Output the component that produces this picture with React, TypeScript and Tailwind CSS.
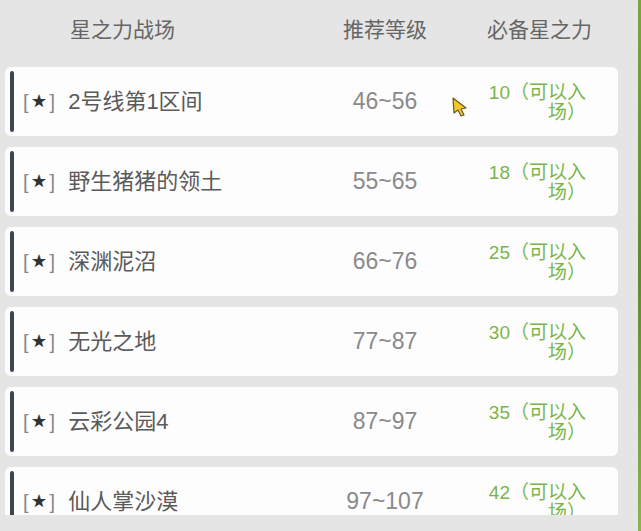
import React from 'react';

interface Arena {
  name: string;
  level: string;
  power: number;
}

const arenas: Arena[] = [
  { name: '2号线第1区间', level: '46~56', power: 10 },
  { name: '野生猪猪的领土', level: '55~65', power: 18 },
  { name: '深渊泥沼', level: '66~76', power: 25 },
  { name: '无光之地', level: '77~87', power: 30 },
  { name: '云彩公园4', level: '87~97', power: 35 },
  { name: '仙人掌沙漠', level: '97~107', power: 42 },
];

const font = "font-['Liberation_Sans','Noto_Sans_CJK_SC',sans-serif]";

const ArenaRow: React.FC<{ arena: Arena }> = ({ arena }) => (
  <div className="flex h-[69px] w-[613px] shrink-0 items-center rounded-md bg-[#fdfdfd]">
    <div className="ml-[5px] h-[61px] w-[4px] rounded-full bg-[#3e4550]" />
    <div className="ml-[9px] flex flex-1 items-center text-[22px] text-[#5a5a5a]">
      <span className="text-[20px] text-[#888]">[</span>
      <span className="mx-[3px] text-[15px] text-[#333]">★</span>
      <span className="text-[20px] text-[#888]">]</span>
      <span className="ml-[13px]">{arena.name}</span>
    </div>
    <div className="w-[120px] text-center text-[23px] text-[#8a8a8a]">{arena.level}</div>
    <div className="w-[173px] pt-[3px] pr-[32px] text-right text-[19px] leading-[20px] text-[#7bb548]">
      {arena.power}（可以入
      <br />
      场）
    </div>
  </div>
);

export default function App() {
  return (
    <div className={`relative flex h-[531px] w-[641px] overflow-hidden bg-[#e5e5e5] ${font}`}>
      <div className="flex flex-1 flex-col">
        <div className="flex h-[67px] shrink-0 items-center pb-[8px] text-[21px] text-[#666]">
          <div className="flex-1 pl-[70px]">星之力战场</div>
          <div className="w-[120px] text-center">推荐等级</div>
          <div className="w-[193px] pl-[42px]">必备星之力</div>
        </div>
        <div className="flex h-[448px] flex-col gap-[11px] overflow-hidden pl-[5px]">
          {arenas.map((a) => (
            <ArenaRow key={a.name} arena={a} />
          ))}
        </div>
      </div>
      <div className="w-[3px] bg-gradient-to-b from-[#7aa640] via-[#5d8a2e] to-[#8ab450]" />

      {/* mouse cursor left in the capture */}
      <svg className="absolute left-[451px] top-[96px]" width="18" height="22" viewBox="0 0 18 22">
        <path d="M2 2 L15 12 L10 13 L13 19 L10 20 L7 14 L3 17 Z" fill="#f2c92c" stroke="#6b5a1a" strokeWidth="1.2" strokeLinejoin="round" />
      </svg>
    </div>
  );
}
